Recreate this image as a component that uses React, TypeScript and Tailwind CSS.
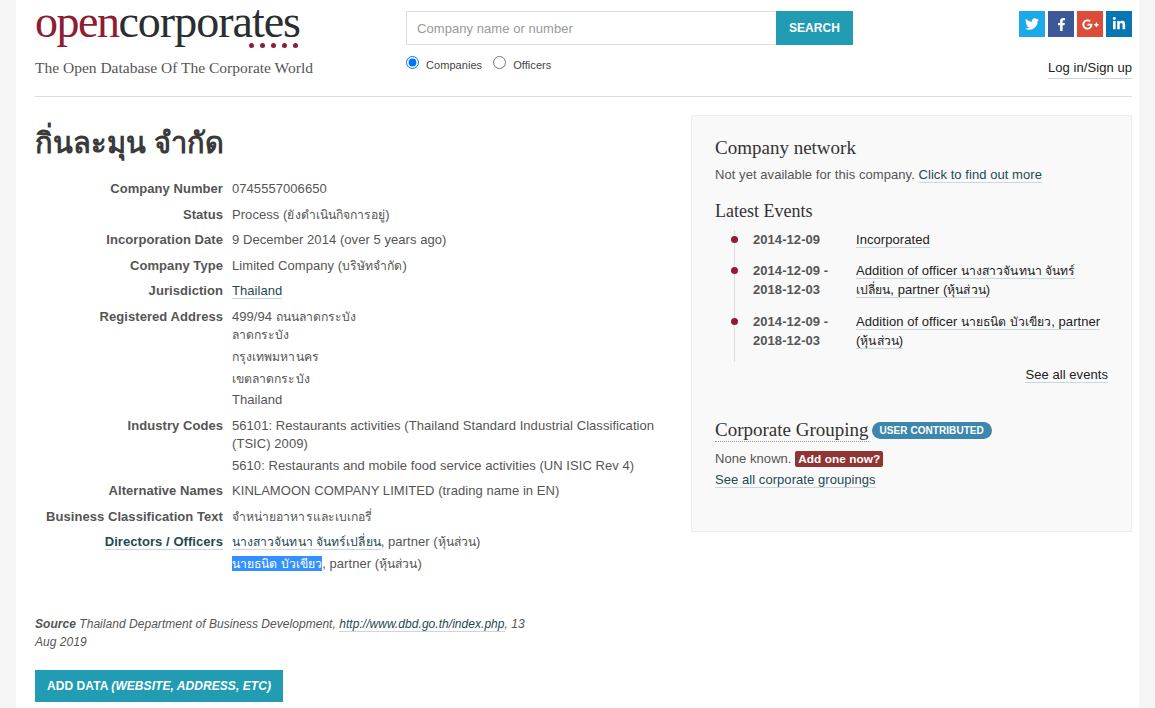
import { FaTwitter, FaFacebookF, FaGooglePlusG, FaLinkedinIn } from 'react-icons/fa'

const SANS = "font-['Liberation_Sans',Arial,sans-serif]"
const SERIF = "font-['Liberation_Serif',Georgia,serif]"

const linkClass = 'text-[#1f4a52] border-b border-[#c8d8de]'
const eventLink = 'border-b border-[#c8d8de] text-[#222]'

// the fallback Thai font runs a bit wider than the Latin text around it
function Th({ children }: { children: React.ReactNode }) {
  return <span className="text-[12.2px] leading-none">{children}</span>
}

function Row({ label, children, labelLink }: { label: string; children: React.ReactNode; labelLink?: boolean }) {
  return (
    <div className="flex pb-[7px]">
      <div className="w-[188px] shrink-0 text-right font-bold text-[#555]">
        {labelLink ? <a className={linkClass}>{label}</a> : label}
      </div>
      <div className="flex-1 pl-[9px]">{children}</div>
    </div>
  )
}

function EventItem({ date, children }: { date: React.ReactNode; children: React.ReactNode }) {
  return (
    <li className="relative flex pb-[12.5px] leading-[19px]">
      <span className="absolute left-[-22px] top-[6px] h-[7px] w-[7px] rounded-full bg-[#8e1c34]" />
      <div className="w-[103px] shrink-0 font-bold text-[#555]">{date}</div>
      <div className="flex-1">{children}</div>
    </li>
  )
}

export default function App() {
  return (
    <div className={`h-[708px] overflow-hidden bg-[#f5f5f5] px-[16px] text-[13px] leading-[18.5px] tracking-[0.06px] text-[#555] ${SANS}`}>
      <div className="h-full bg-white pl-[19px] pr-[7px]">
        {/* Header */}
        <header className="flex h-[97px] border-b border-[#ddd]">
          <div className="w-[371px] shrink-0">
            <div className={`relative h-[55px] text-[46px] leading-[43px] tracking-[-1.5px] ${SERIF}`}>
              <span className="text-[#8e1c34]">open</span>
              <span className="tracking-[-1px] text-[#2b2e30]">corporates</span>
              <span className="absolute left-[214px] top-[43px] flex gap-[6px]">
                {[0, 1, 2, 3, 4].map((i) => (
                  <span key={i} className="h-[5px] w-[5px] rounded-full bg-[#8e1c34]" />
                ))}
              </span>
            </div>
            <div className={`mt-[4px] text-[15.5px] tracking-normal text-[#555] ${SERIF}`}>The Open Database Of The Corporate World</div>
          </div>
          <div className="w-[447px] shrink-0 pt-[11px]">
            <div className="flex h-[34px]">
              <input
                placeholder="Company name or number"
                className="h-full w-[370px] border border-r-0 border-[#ddd] px-[10px] text-[13px] placeholder:text-[#999]"
              />
              <button className="h-full w-[77px] bg-[#219cb2] text-[12px] font-bold text-white">SEARCH</button>
            </div>
            <div className="mt-[11px] flex items-center text-[11px] text-[#444]">
              <input type="radio" defaultChecked className="m-0 mb-[6px] h-[13px] w-[13px]" />
              <span className="ml-[7px]">Companies</span>
              <input type="radio" className="m-0 mb-[6px] ml-[11px] h-[13px] w-[13px]" />
              <span className="ml-[7px]">Officers</span>
            </div>
          </div>
          <div className="flex flex-1 flex-col items-end pt-[11px]">
            <div className="flex gap-[3px]">
              <span className="flex h-[26px] w-[26px] items-center justify-center bg-[#1da8e8] text-[14px] text-white">
                <FaTwitter />
              </span>
              <span className="flex h-[26px] w-[26px] items-center justify-center bg-[#3b5998] text-[13px] text-white">
                <FaFacebookF />
              </span>
              <span className="flex h-[26px] w-[26px] items-center justify-center bg-[#dd4b39] text-[17px] text-white">
                <FaGooglePlusG />
              </span>
              <span className="flex h-[26px] w-[26px] items-center justify-center bg-[#0976b4] text-[14px] text-white">
                <FaLinkedinIn />
              </span>
            </div>
            <a className="mt-[22px] border-b border-[#c8d8de] text-[#222]">Log in/Sign up</a>
          </div>
        </header>

        <div className="flex pt-[18px]">
          {/* Main column */}
          <main className="w-[656px] shrink-0">
            <h1 className="mt-[8px] text-[29px] font-bold leading-[40px] tracking-normal text-[#3a3a3a]">กิ่นละมุน จำกัด</h1>
            <div className="mt-[17px] w-[622px]">
              <Row label="Company Number">0745557006650</Row>
              <Row label="Status">Process (<Th>ยังดำเนินกิจการอยู่</Th>)</Row>
              <Row label="Incorporation Date">9 December 2014 (over 5 years ago)</Row>
              <Row label="Company Type">Limited Company (<Th>บริษัทจำกัด</Th>)</Row>
              <Row label="Jurisdiction"><a className={linkClass}>Thailand</a></Row>
              <Row label="Registered Address">
                <div>499/94 <Th>ถนนลาดกระบัง</Th></div>
                <div><Th>ลาดกระบัง</Th></div>
                <div className="mt-[3.25px]"><Th>กรุงเทพมหานคร</Th></div>
                <div className="mt-[3.25px]"><Th>เขตลาดกระบัง</Th></div>
                <div className="mt-[3.25px]">Thailand</div>
              </Row>
              <Row label="Industry Codes">
                <div>56101: Restaurants activities (Thailand Standard Industrial Classification (TSIC) 2009)</div>
                <div className="mt-[3px]">5610: Restaurants and mobile food service activities (UN ISIC Rev 4)</div>
              </Row>
              <Row label="Alternative Names">KINLAMOON COMPANY LIMITED (trading name in EN)</Row>
              <Row label="Business Classification Text"><Th>จำหน่ายอาหารและเบเกอรี่</Th></Row>
              <Row label="Directors / Officers" labelLink>
                <div><a className={linkClass}><Th>นางสาวจันทนา จันทร์เปลี่ยน</Th></a>, partner (<Th>หุ้นส่วน</Th>)</div>
                <div className="mt-[3px]"><a className="bg-[#3390ff] text-white"><Th>นายธนิต บัวเขียว</Th></a>, partner (<Th>หุ้นส่วน</Th>)</div>
              </Row>
            </div>
            <p className="mt-[35px] w-[500px] text-[12px] italic leading-[18px] tracking-[0.04px]">
              <b>Source</b> Thailand Department of Business Development, <a className={linkClass}>http://www.dbd.go.th/index.php</a>, 13 Aug 2019
            </p>
            <button className="mt-[19px] h-[32px] w-[248px] bg-[#219cb2] text-[12px] font-bold text-white">
              ADD DATA <i>(WEBSITE, ADDRESS, ETC)</i>
            </button>
          </main>

          {/* Sidebar */}
          <aside className="h-[417px] flex-1 border border-[#eee] bg-[#f9f9f9] px-[23px] pt-[21px]">
            <h3 className={`text-[19px] leading-[22px] tracking-normal text-[#333] ${SERIF}`}>Company network</h3>
            <p className="mt-[7px]">Not yet available for this company. <a className={linkClass}>Click to find out more</a></p>
            <h3 className={`mt-[15px] text-[18px] leading-[22px] tracking-normal text-[#333] ${SERIF}`}>Latest Events</h3>
            <ul className="ml-[19px] mt-[8px] border-l border-[#ddd] pl-[18px]">
              <EventItem date="2014-12-09"><a className={eventLink}>Incorporated</a></EventItem>
              <EventItem date={<>2014-12-09 -<br />2018-12-03</>}>
                <a className={eventLink}>Addition of officer <Th>นางสาวจันทนา จันทร์เปลี่ยน</Th>, partner (<Th>หุ้นส่วน</Th>)</a>
              </EventItem>
              <EventItem date={<>2014-12-09 -<br />2018-12-03</>}>
                <a className={eventLink}>Addition of officer <Th>นายธนิต บัวเขียว</Th>, partner (<Th>หุ้นส่วน</Th>)</a>
              </EventItem>
            </ul>
            <div className="mt-[4px] text-right">
              <a className={eventLink}>See all events</a>
            </div>
            <div className="mt-[34px] flex items-center">
              <h3 className={`border-b border-dotted border-[#999] text-[19px] leading-[22px] tracking-normal text-[#333] ${SERIF}`}>Corporate Grouping</h3>
              <span className="ml-[3px] rounded-full bg-[#3c87ab] px-[8px] text-[10px] font-bold leading-[17px] text-white">USER CONTRIBUTED</span>
            </div>
            <p className="mt-[8px]">None known. <span className="rounded-[2px] bg-[#8f3533] px-[3px] py-[1px] text-[11.8px] font-bold text-white">Add one now?</span></p>
            <p className="mt-[3px]"><a className={linkClass}>See all corporate groupings</a></p>
          </aside>
        </div>
      </div>
    </div>
  )
}
